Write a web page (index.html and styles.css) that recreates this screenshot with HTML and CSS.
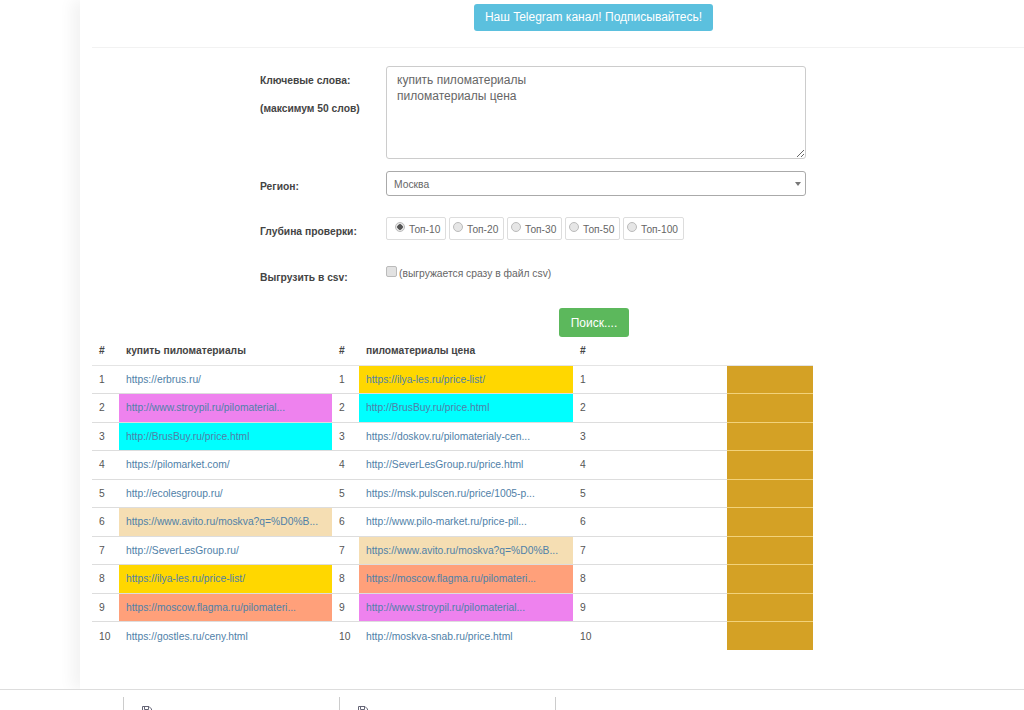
FILE: index.html
```html
<!DOCTYPE html>
<html lang="ru">
<head>
  <meta charset="UTF-8">
  <title>Проверка выдачи</title>
  <meta name="viewport" content="width=device-width, initial-scale=1.0">
  <link rel="stylesheet" href="styles.css">
</head>
<body>

  <div class="main">
    <div class="top-bar">
      <a class="btn btn-info" href="#">Наш Telegram канал! Подписывайтесь!</a>
    </div>

    <form class="search-form">
      <div class="form-row row-keywords">
        <div class="form-label">
          <p>Ключевые слова:</p>
          <p>(максимум 50 слов)</p>
        </div>
        <textarea class="keywords">купить пиломатериалы
пиломатериалы цена</textarea>
      </div>

      <div class="form-row row-region">
        <div class="form-label"><p>Регион:</p></div>
        <div class="select-wrap">
          <select class="region">
            <option>Москва</option>
          </select>
        </div>
      </div>

      <div class="form-row row-depth">
        <div class="form-label"><p>Глубина проверки:</p></div>
        <div class="depth-list">
          <label class="depth"><input type="radio" name="depth" checked> Топ-10</label>
          <label class="depth"><input type="radio" name="depth"> Топ-20</label>
          <label class="depth"><input type="radio" name="depth"> Топ-30</label>
          <label class="depth"><input type="radio" name="depth"> Топ-50</label>
          <label class="depth"><input type="radio" name="depth"> Топ-100</label>
        </div>
      </div>

      <div class="form-row row-csv">
        <div class="form-label"><p>Выгрузить в csv:</p></div>
        <label class="csv"><input type="checkbox"> (выгружается сразу в файл csv)</label>
      </div>

      <div class="form-submit">
        <button class="btn btn-success" type="button">Поиск....</button>
      </div>
    </form>

    <table class="results">
      <thead>
        <tr>
          <th>#</th>
          <th>купить пиломатериалы</th>
          <th>#</th>
          <th>пиломатериалы цена</th>
          <th>#</th>
          <th></th>
        </tr>
      </thead>
      <tbody>
        <tr>
          <td>1</td>
          <td><a href="#">https://erbrus.ru/</a></td>
          <td>1</td>
          <td class="gold"><a href="#">https://ilya-les.ru/price-list/</a></td>
          <td>1</td>
          <td class="mark"></td>
        </tr>
        <tr>
          <td>2</td>
          <td class="violet"><a href="#">http://www.stroypil.ru/pilomaterial...</a></td>
          <td>2</td>
          <td class="cyan"><a href="#">http://BrusBuy.ru/price.html</a></td>
          <td>2</td>
          <td class="mark"></td>
        </tr>
        <tr>
          <td>3</td>
          <td class="cyan"><a href="#">http://BrusBuy.ru/price.html</a></td>
          <td>3</td>
          <td><a href="#">https://doskov.ru/pilomaterialy-cen...</a></td>
          <td>3</td>
          <td class="mark"></td>
        </tr>
        <tr>
          <td>4</td>
          <td><a href="#">https://pilomarket.com/</a></td>
          <td>4</td>
          <td><a href="#">http://SeverLesGroup.ru/price.html</a></td>
          <td>4</td>
          <td class="mark"></td>
        </tr>
        <tr>
          <td>5</td>
          <td><a href="#">http://ecolesgroup.ru/</a></td>
          <td>5</td>
          <td><a href="#">https://msk.pulscen.ru/price/1005-p...</a></td>
          <td>5</td>
          <td class="mark"></td>
        </tr>
        <tr>
          <td>6</td>
          <td class="wheat"><a href="#">https://www.avito.ru/moskva?q=%D0%B...</a></td>
          <td>6</td>
          <td><a href="#">http://www.pilo-market.ru/price-pil...</a></td>
          <td>6</td>
          <td class="mark"></td>
        </tr>
        <tr>
          <td>7</td>
          <td><a href="#">http://SeverLesGroup.ru/</a></td>
          <td>7</td>
          <td class="wheat"><a href="#">https://www.avito.ru/moskva?q=%D0%B...</a></td>
          <td>7</td>
          <td class="mark"></td>
        </tr>
        <tr>
          <td>8</td>
          <td class="gold"><a href="#">https://ilya-les.ru/price-list/</a></td>
          <td>8</td>
          <td class="salmon"><a href="#">https://moscow.flagma.ru/pilomateri...</a></td>
          <td>8</td>
          <td class="mark"></td>
        </tr>
        <tr>
          <td>9</td>
          <td class="salmon"><a href="#">https://moscow.flagma.ru/pilomateri...</a></td>
          <td>9</td>
          <td class="violet"><a href="#">http://www.stroypil.ru/pilomaterial...</a></td>
          <td>9</td>
          <td class="mark"></td>
        </tr>
        <tr>
          <td>10</td>
          <td><a href="#">https://gostles.ru/ceny.html</a></td>
          <td>10</td>
          <td><a href="#">http://moskva-snab.ru/price.html</a></td>
          <td>10</td>
          <td class="mark"></td>
        </tr>
      </tbody>
    </table>
  </div>

  <div class="footer">
    <div class="footer-cell first"></div>
    <div class="footer-cell">
      <svg class="file-icon" viewBox="0 0 12 14" width="12" height="14">
        <path d="M1.5 1.5h6.5l2.5 2.5v9h-9z M3.5 1.5v3h4v-3" fill="none" stroke="#667" stroke-width="1"/>
      </svg>
    </div>
    <div class="footer-cell">
      <svg class="file-icon" viewBox="0 0 12 14" width="12" height="14">
        <path d="M1.5 1.5h6.5l2.5 2.5v9h-9z M3.5 1.5v3h4v-3" fill="none" stroke="#667" stroke-width="1"/>
      </svg>
    </div>
  </div>

</body>
</html>
```

FILE: styles.css
```css
* {
  margin: 0;
  padding: 0;
  box-sizing: border-box;
}

html, body {
  height: 100%;
  overflow: hidden;
}

body {
  background: #fff;
  color: #333;
  font-family: 'Liberation Sans', Arial, sans-serif;
  font-size: 10.3px;
}

a {
  color: #4f81a8;
  text-decoration: none;
}

.main {
  height: 689px;
  margin-left: 80px;
  padding: 0 12px;
  background: #fff;
  box-shadow: -8px 0 14px rgba(0,0,0,0.05);
}

.top-bar {
  height: 48px;
  padding: 4px 0 0 71px;
  text-align: center;
  margin-right: -12px;
  border-bottom: 1px solid #f2f2f2;
}

.btn {
  display: inline-block;
  border: none;
  border-radius: 3px;
  color: #fff;
  font-family: inherit;
  font-size: 12px;
  cursor: pointer;
}

.btn-info {
  width: 239px;
  height: 27px;
  line-height: 26px;
  background: #5bc0de;
}

.btn-success {
  width: 70px;
  height: 29px;
  background: #5cb85c;
}

/* form */
.search-form {
  margin-left: 168px;
  width: 546px;
  padding-top: 18px;
}

.form-row {
  display: grid;
  grid-template-columns: 126px 420px;
}

.form-label {
  font-weight: bold;
  color: #444;
}

.row-keywords {
  height: 105px;
}

.row-keywords .form-label {
  padding-top: 1px;
}

.row-keywords .form-label p {
  height: 28px;
  line-height: 28px;
}

.keywords {
  display: block;
  width: 420px;
  height: 93px;
  padding: 5px 10px;
  border: 1px solid #ccc;
  border-radius: 3px;
  color: #666;
  font-family: inherit;
  font-size: 12px;
  line-height: 16px;
}

.row-region {
  height: 46px;
}

.row-region .form-label {
  padding-top: 10px;
}

.select-wrap {
  position: relative;
  height: 25px;
}

.select-wrap::after {
  content: "";
  position: absolute;
  top: 11px;
  right: 5px;
  border-top: 4px solid #777;
  border-left: 3px solid transparent;
  border-right: 3px solid transparent;
}

.region {
  appearance: none;
  display: block;
  width: 100%;
  height: 25px;
  padding: 2px 7px 0;
  background: #fff;
  border: 1px solid #aaa;
  border-radius: 3px;
  color: #666;
  font-family: inherit;
  font-size: 10.3px;
}

.row-depth {
  height: 49px;
}

.row-depth .form-label {
  padding-top: 9px;
}

.depth-list {
  display: flex;
  gap: 3px;
  height: 23px;
}

.depth {
  display: flex;
  align-items: center;
  gap: 4px;
  width: 55px;
  padding: 2px 0 0 3px;
  border: 1px solid #ddd;
  border-radius: 2px;
  color: #666;
  font-size: 10.2px;
}

.depth:first-child {
  width: 60px;
  padding-left: 8px;
}

.depth:last-child {
  width: 61px;
}

.depth input {
  appearance: none;
  flex: none;
  width: 10px;
  height: 10px;
  margin-bottom: 5px;
  border: 1px solid #bbb;
  border-radius: 50%;
  background: #e6e6e6;
}

.depth input:checked {
  background: radial-gradient(circle, #555 0 2.5px, #e6e6e6 3px);
}

.row-csv {
  height: 42px;
}

.row-csv .form-label {
  padding-top: 6px;
}

.csv {
  color: #666;
  font-size: 10.3px;
  display: flex;
  align-items: flex-start;
  gap: 2px;
  line-height: 14px;
  padding-top: 1px;
}

.csv input {
  appearance: none;
  flex: none;
  width: 11px;
  height: 11px;
  margin-top: -1px;
  border: 1px solid #bbb;
  border-radius: 2px;
  background: #e2e2e2;
}

.form-submit {
  padding-left: 299px;
}

/* results table */
.results {
  width: 721px;
  table-layout: fixed;
  border-collapse: collapse;
  margin-top: -1px;
}

.results th:nth-child(1) { width: 27px; }
.results th:nth-child(2) { width: 213px; }
.results th:nth-child(3) { width: 27px; }
.results th:nth-child(4) { width: 214px; }
.results th:nth-child(5) { width: 154px; }
.results th:nth-child(6) { width: 86px; }

.results th {
  height: 29px;
  padding: 0 7px;
  text-align: left;
  font-size: 10.25px;
  color: #444;
  border-bottom: 1px solid #e4e4e4;
}

.results td {
  height: 28.5px;
  padding: 0 7px;
  font-size: 10.3px;
  color: #555;
  border-top: 1px solid #ddd;
  white-space: nowrap;
  overflow: hidden;
}

.results td.violet { background: #ee82ee; }
.results td.cyan { background: #00ffff; }
.results td.gold { background: #ffd700; }
.results td.wheat { background: #f5deb3; }
.results td.salmon { background: #ffa07a; }

.results td.mark {
  background: #d4a125;
  border-top-color: #f2d27a;
}

/* footer */
.footer {
  display: flex;
  height: 40px;
  padding-top: 7px;
  border-top: 1px solid #ddd;
  background: #fff;
}

.footer-cell {
  width: 216px;
  padding: 8px 0 0 17px;
  border-right: 1px solid #ccc;
}

.footer-cell.first {
  width: 124px;
  padding: 0;
}

.file-icon {
  display: block;
}
```
